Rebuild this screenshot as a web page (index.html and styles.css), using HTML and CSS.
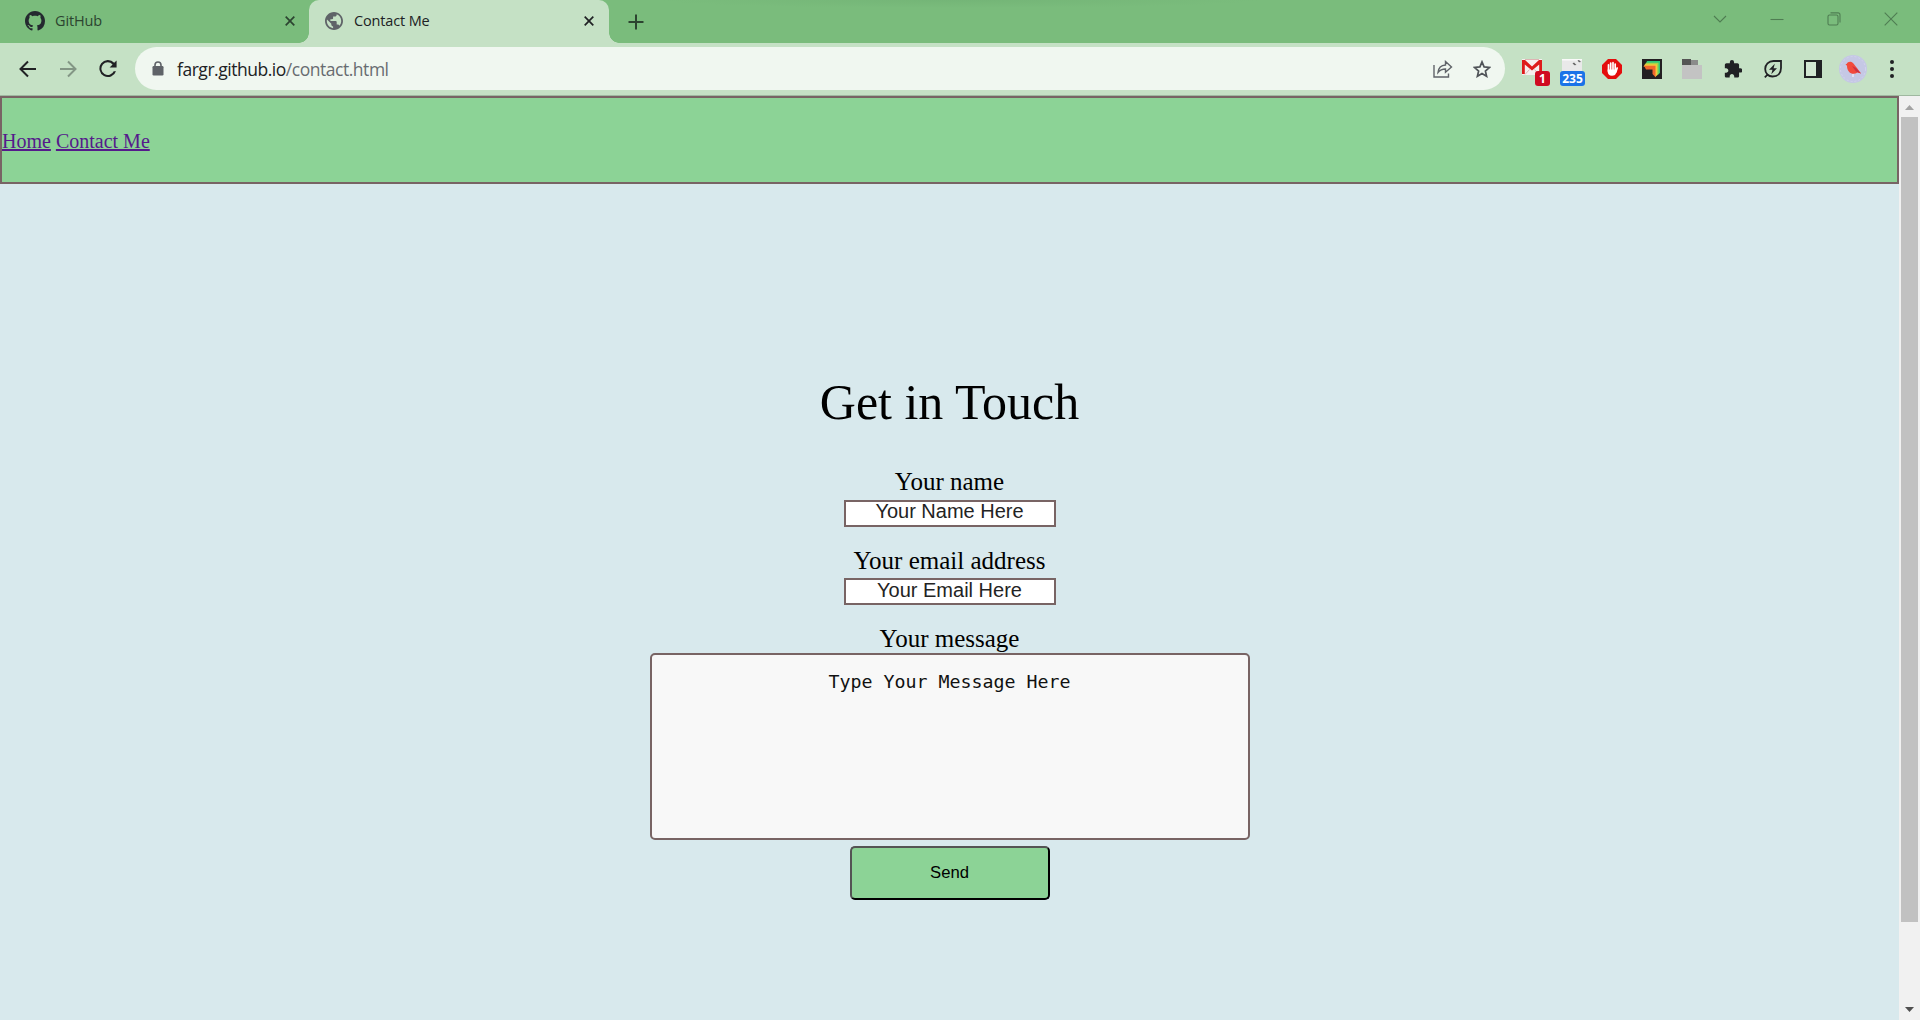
FILE: index.html
```html
<!DOCTYPE html>
<html lang="en">
<head>
<meta charset="utf-8">
<title>Contact Me</title>
<link rel="stylesheet" href="styles.css">
</head>
<body>
<div class="browser">
  <div class="tabs">
    <div class="tab">
      <svg class="favicon" width="20" height="20" viewBox="0 0 16 16" fill="#24292f"><path d="M8 0C3.58 0 0 3.58 0 8c0 3.54 2.29 6.53 5.47 7.59.4.07.55-.17.55-.38 0-.19-.01-.82-.01-1.49-2.01.37-2.53-.49-2.69-.94-.09-.23-.48-.94-.82-1.13-.28-.15-.68-.52-.01-.53.63-.01 1.08.58 1.23.82.72 1.21 1.87.87 2.33.66.07-.52.28-.87.51-1.07-1.78-.2-3.64-.89-3.64-3.95 0-.87.31-1.59.82-2.15-.08-.2-.36-1.02.08-2.12 0 0 .67-.21 2.2.82.64-.18 1.32-.27 2-.27s1.36.09 2 .27c1.53-1.04 2.2-.82 2.2-.82.44 1.1.16 1.92.08 2.12.51.56.82 1.27.82 2.15 0 3.07-1.87 3.75-3.65 3.95.29.25.54.73.54 1.48 0 1.07-.01 1.93-.01 2.2 0 .21.15.46.55.38A8.01 8.01 0 0 0 16 8c0-4.42-3.58-8-8-8z"/></svg>
      <span class="tab-title">GitHub</span>
      <svg class="tab-close" width="10" height="10" viewBox="0 0 10 10" stroke="#2c4430" stroke-width="1.7"><path d="M.7.7l8.6 8.6M9.3.7L.7 9.3"/></svg>
    </div>
    <div class="tab tab-active">
      <svg class="favicon" width="18" height="18" viewBox="2 2 20 20" fill="#5f6368"><path d="M12 2C6.480 2 2 6.480 2 12s4.480 10 10 10 10-4.480 10-10S17.520 2 12 2zM4 12c0-.610.080-1.210.210-1.780L8.990 15v1c0 1.100.900 2 2 2v1.930C7.060 19.430 4 16.070 4 12zm13.890 5.400c-.260-.810-1-1.400-1.900-1.400h-1v-3c0-.550-.450-1-1-1h-6v-2h2c.550 0 1-.450 1-1V7h2c1.100 0 2-.900 2-2v-.410C17.920 5.770 20 8.650 20 12c0 2.080-.810 3.980-2.110 5.400z"/></svg>
      <span class="tab-title">Contact Me</span>
      <svg class="tab-close" width="10" height="10" viewBox="0 0 10 10" stroke="#202124" stroke-width="1.7"><path d="M.7.7l8.6 8.600M9.300.7L.7 9.300"/></svg>
    </div>
    <svg class="new-tab" width="16" height="16" viewBox="0 0 16 16" stroke="#2c4430" stroke-width="2"><path d="M8 .5v15M.5 8h15"/></svg>
    <div class="window-controls">
      <svg width="14" height="14" viewBox="0 0 14 14"><path d="M1 4l6 6 6-6"/></svg>
      <svg width="14" height="14" viewBox="0 0 14 14"><path d="M.5 7.500h13"/></svg>
      <svg width="14" height="14" viewBox="0 0 14 14"><rect x="1" y="3" width="10" height="10" rx="1.500"/><path d="M3.500.9h7.500a2 2 0 0 1 2 2v7.600"/></svg>
      <svg width="14" height="14" viewBox="0 0 14 14"><path d="M.7.7l12.600 12.600M13.300.7L.7 13.300"/></svg>
    </div>
  </div>
  <div class="toolbar">
    <div class="nav-buttons">
      <svg width="18" height="18" viewBox="0 0 18 18" fill="none" stroke="#202124" stroke-width="2"><path d="M17 9H2M9 1.500L1.500 9 9 16.500"/></svg>
      <svg width="18" height="18" viewBox="0 0 18 18" fill="none" stroke="#839685" stroke-width="2"><path d="M1 9h15M9 1.500L16.500 9 9 16.500"/></svg>
      <svg width="18" height="18" viewBox="0 0 18 18" fill="#202124"><path d="M15.200 2.800A8.500 8.500 0 1 0 17 11.200h-2.300a6.400 6.400 0 1 1-1.100-6.800L10.600 7.400h7V.5z"/></svg>
    </div>
    <div class="omnibox">
      <svg class="lock" width="12" height="15" viewBox="0 0 12 15"><path d="M3 6V4a3 3 0 0 1 6 0v2" fill="none" stroke="#5f6368" stroke-width="1.600"/><rect x=".5" y="5" width="11" height="9.500" rx="1.200" fill="#5f6368"/></svg>
      <span class="url">fargr.github.io<span class="url-path">/contact.html</span></span>
      <svg class="share" width="20" height="18" viewBox="0 0 20 18" fill="none" stroke="#5f6368" stroke-width="1.400"><path d="M1 5v12h14.500v-3.500M5 12.500C5.500 8 8 5.200 12.500 5V1.500l6 5.500-6 5.300V9C9 9 7 10 5 12.500z"/></svg>
      <svg class="star" width="18" height="18" viewBox="0 0 18 18" fill="none" stroke="#505458" stroke-width="1.700"><path d="M9 1.900l2.100 5 5.400.5-4.100 3.600 1.200 5.300L9 13.500l-4.600 2.800 1.200-5.300-4.100-3.600 5.400-.5z"/></svg>
    </div>
    <div class="extensions">
      <span class="ext"><svg width="20" height="16" viewBox="0 0 20 16"><path fill="#f6eeee" d="M0 0h20v16H0z"/><path fill="#de1b1b" d="M0 1h3l7 6.500L17 1h3v14h-2.800V5.500L10 11.500 2.800 5.500V15H0z"/><path fill="none" stroke="#d9a5a5" stroke-width=".8" d="M3 .5h14M3 15.500l4.500-5M17 15.500l-4.500-5"/></svg><b class="badge badge-red">1</b></span>
      <span class="ext"><svg width="20" height="18" viewBox="0 0 20 18"><path fill="#e9e9e9" d="M0 0h20v18H0z"/><path fill="#fafafa" d="M0 0h20v1.500H0z"/><path fill="#666" d="M10.500 4.500l1.500-1 2.500 2.500-2 .3zM15.500 1.500l1.500-.5 2 2-2 .3z"/></svg><b class="badge badge-blue">235</b></span>
      <svg width="20" height="20" viewBox="0 0 20 20"><path fill="#e40d0d" d="M6 0h8l6 6v8l-6 6H6l-6-6V6z"/><path fill="none" stroke="#fff" stroke-width="1.700" stroke-linecap="round" d="M6.500 5.800V12M8.700 4v7M11 3.700V11M13.200 5v7M15.200 9l-1.400 4"/><path fill="#fff" d="M5.700 10.500h8.400l1.100.8-1.300 3.200c-.7 1.500-1.700 2.200-3.900 2.200-3 0-4.300-1.800-4.300-4z"/></svg>
      <svg width="20" height="20" viewBox="0 0 20 20"><path fill="#231f22" d="M0 0h20v20H0z"/><path fill="#2fc77a" d="M5 2h13v12l-2.500 2V4.500H4z"/><path fill="#a5d64b" d="M4 3.700h12.500V15l-2 2V6.200H2.500z"/><path fill="#f8c63b" d="M3 5.200h12v11l-2 2V7.700H1.500z"/><path fill="#f1672c" d="M2 6.700h11.500v11.500L10.500 15v-4.500H4z"/></svg>
      <svg width="20" height="20" viewBox="0 0 20 20"><path fill="#8b8b8b" d="M0 1h16v5H0z"/><path fill="#555" d="M0 0h9v6H0z"/><path fill="#c3c3c3" d="M0 6h20v14H0z"/></svg>
      <svg width="18" height="18" viewBox="1 1 21.500 21.500" fill="#202124"><path d="M20.500 11H19V7c0-1.100-.9-2-2-2h-4V3.500a2.500 2.500 0 0 0-5 0V5H4c-1.100 0-1.990.9-1.990 2v3.800H3.500c1.490 0 2.700 1.210 2.700 2.700s-1.210 2.700-2.700 2.700H2V20c0 1.100.9 2 2 2h3.800v-1.500c0-1.490 1.210-2.700 2.700-2.700s2.700 1.210 2.700 2.700V22H17c1.100 0 2-.9 2-2v-4h1.500a2.500 2.500 0 0 0 0-5z"/></svg>
      <svg width="18" height="18" viewBox="0 0 18 18" fill="none" stroke="#202124" stroke-width="1.800"><path d="M17 1H9.500C4.500 1 1.200 4.500 1.200 9c0 4.700 3.300 7.500 7.300 7.500C14 16.500 17 13 17 8zM.8 17.300l3-3"/><path fill="#202124" stroke="none" d="M10.800 3.700L5 9.800h3.500l-1.200 4.500L13 8.200H9.600z"/></svg>
      <svg width="18" height="18" viewBox="0 0 18 18"><path fill="#202124" d="M0 0h18v18H0z"/><path fill="#d2e7d2" d="M2 2h10v14H2z"/></svg>
      <svg class="avatar" width="28" height="28" viewBox="0 0 28 28"><circle cx="14" cy="14" r="14" fill="#c5c8e5"/><circle cx="14" cy="14" r="12.500" fill="none" stroke="#d3d3ee" stroke-dasharray="2 2"/><path fill="#f24a3d" d="M6.500 9.500l1.300-.8c.7-2 4-3 6.200-.7 1.500 1.500 2.500 3.500 4 5l4 5.500-3.500-1c-3 2-6.500 1.500-8.500-.8-1.600-1.900-2-4-2-6z"/><path fill="#c93345" d="M13 11l4 2 5 5.500-5-2z"/><path stroke="#e8eaf8" stroke-width="1.500" d="M14 19v3"/></svg>
      <svg class="menu" width="4" height="18" viewBox="0 0 4 18" fill="#202124"><circle cx="2" cy="2" r="2"/><circle cx="2" cy="9" r="2"/><circle cx="2" cy="16" r="2"/></svg>
    </div>
  </div>
  <div class="viewport">
    <div class="page">
      <nav class="site-nav"><a href="#">Home</a> <a href="#">Contact Me</a></nav>
      <main class="contact">
        <h1>Get in Touch</h1>
        <label>Your name</label>
        <div class="field">Your Name Here</div>
        <label class="label-email">Your email address</label>
        <div class="field field-email">Your Email Here</div>
        <label class="label-message">Your message</label>
        <div class="message">Type Your Message Here</div>
        <button class="send">Send</button>
      </main>
    </div>
    <div class="scrollbar">
      <svg width="9" height="5" viewBox="0 0 9 5"><path fill="#a3a3a3" d="M4.500 0L9 5H0z"/></svg>
      <div class="thumb"></div>
      <svg class="arrow-down" width="9" height="5" viewBox="0 0 9 5"><path fill="#505050" d="M0 0h9L4.500 5z"/></svg>
    </div>
  </div>
</div>
</body>
</html>
```
FILE: styles.css
```css
* { box-sizing: border-box; }
body { margin: 0; overflow: hidden; font-family: "Liberation Serif", "Times New Roman", serif; }
svg { display: block; flex: none; }
.browser { width: 1920px; height: 1020px; display: flex; flex-direction: column; }

.tabs { height: 43px; display: flex; align-items: center; background: radial-gradient(ellipse 300px 8px at 960px 0, #74b577, #7abc7c) #7abc7c; font-family: "Open Sans", sans-serif; font-size: 14.5px; }
.tab { width: 309px; height: 43px; display: flex; align-items: center; padding: 0 14px 2px 25px; color: #2c4430; }
.tab .favicon { margin-right: 10px; }
.tab-active { width: 300px; padding: 0 15px 2px 16px; background: #c5e1c5; color: #202124; border-radius: 10px 10px 0 0; position: relative; }
.tab-active .favicon { margin-right: 11px; }
.tab-active::before, .tab-active::after { content: ""; position: absolute; bottom: 0; width: 10px; height: 10px; }
.tab-active::before { left: -10px; background: radial-gradient(circle at 0 0, transparent 9.500px, #c5e1c5 10px); }
.tab-active::after { right: -10px; background: radial-gradient(circle at 100% 0, transparent 9.500px, #c5e1c5 10px); }
.tab-close { margin-left: auto; }
.tab-title { white-space: nowrap; line-height: 20px; letter-spacing: -0.150px; }
.new-tab { margin-left: 19px; }
.window-controls { margin-left: auto; display: flex; gap: 43px; padding: 0 22px 6px 0; }
.window-controls svg { fill: none; stroke: #4f7d52; stroke-width: 1.100; }

.toolbar { height: 53px; display: flex; align-items: center; padding: 0 26px 1px 19px; background: #c5e1c5; border-bottom: 1px solid #9fb8a0; }
.nav-buttons { display: flex; gap: 22px; width: 116px; }
.omnibox { width: 1370px; height: 43px; display: flex; align-items: center; padding: 0 14px 0 17px; border-radius: 22px; background: #f0f7f0; }
.url { margin: 0 auto 0 13px; padding-top: 1px; font: 17.500px/24px "Open Sans", sans-serif; letter-spacing: -0.470px; color: #202124; white-space: nowrap; }
.url-path { color: #686c70; }
.share { margin-right: 20px; }
.extensions { display: flex; flex: 1; align-items: center; padding-left: 17px; gap: 20px; }
.extensions > :nth-child(n+6) { margin-left: 2px; }
.extensions > .avatar { margin-left: -3px; }
.extensions > .menu { margin-left: auto; }
.ext { position: relative; height: 20px; width: 20px; }
.badge { position: absolute; top: 12px; height: 15px; border-radius: 3px; color: #fff; font: bold 12px/15px "Open Sans", sans-serif; text-align: center; }
.badge-red { left: 13px; width: 15px; background: #cf0a20; }
.badge-blue { left: -2px; width: 25px; background: #1a73e8; }

.viewport { flex: 1; display: flex; background: #d8e9ed; }
.page { width: 1899px; }
.site-nav { height: 88px; border: 2px solid #786464; background: #8cd396; font-size: 20px; line-height: 24px; padding-top: 31px; }
.site-nav a { color: #551a8b; }
.contact { display: flex; flex-direction: column; align-items: center; padding-top: 190px; }
.contact h1 { margin: 0 0 38px; font-size: 50px; font-weight: 400; line-height: 56px; }
.contact label { font-size: 25px; line-height: 28px; height: 32px; }
.contact .label-email { line-height: 30px; }
.contact .label-message { line-height: 32px; }
.field { width: 212px; height: 27px; margin-bottom: 19px; border: 2px solid #786464; background: #fff; color: #232323; font: 20px/19px "Liberation Sans", Arial, sans-serif; text-align: center; }
.field-email { margin-bottom: 18px; line-height: 20px; }
.message { width: 600px; height: 187px; margin-top: -2px; padding-top: 15px; border: 2px solid #786464; border-radius: 5px; background: #f8f8f8; color: #111; font: 18.270px/24px "DejaVu Sans Mono", monospace; text-align: center; }
.send { width: 200px; height: 54px; margin-top: 6px; border: 2px outset #000; border-radius: 5px; background: #8cd396; color: #000; font: 16.670px "Liberation Sans", Arial, sans-serif; }

.scrollbar { width: 21px; background: #f1f1f1; display: flex; flex-direction: column; align-items: center; padding: 9px 0 8px; }
.thumb { width: 17px; height: 805px; margin-top: 7px; background: #c1c1c1; }
.arrow-down { margin-top: auto; }
```
